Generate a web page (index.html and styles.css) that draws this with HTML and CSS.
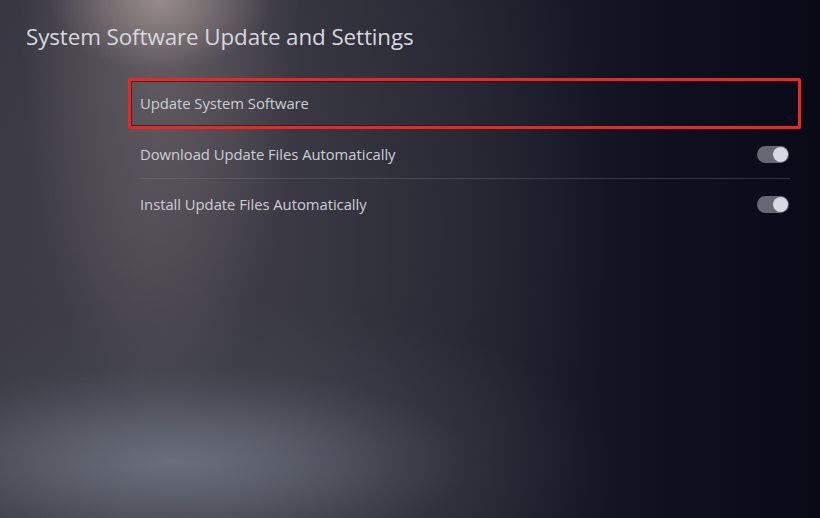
FILE: index.html
```html
<!DOCTYPE html>
<html lang="en">
<head>
<meta charset="utf-8">
<title>System Software Update and Settings</title>
<link rel="stylesheet" href="styles.css">
</head>
<body>
<div class="screen">
  <h1 class="title">System Software Update and Settings</h1>
  <div class="list">
    <div class="row row-focused">
      <span class="label">Update System Software</span>
    </div>
    <div class="row row-divided">
      <span class="label">Download Update Files Automatically</span>
      <span class="toggle"><span class="knob"></span></span>
    </div>
    <div class="row">
      <span class="label">Install Update Files Automatically</span>
      <span class="toggle"><span class="knob"></span></span>
    </div>
  </div>
</div>
</body>
</html>
```

FILE: styles.css
```css
html, body {
  margin: 0;
  padding: 0;
  width: 820px;
  height: 518px;
  overflow: hidden;
}

.screen {
  width: 820px;
  height: 518px;
  box-sizing: border-box;
  padding: 22px 0 0 26px;
  font-family: "Open Sans", "Noto Sans", sans-serif;
  color: #d9dadf;
  background:
    radial-gradient(ellipse 110px 70px at 160px 0px, rgba(185,170,164,0.6), rgba(185,170,164,0) 100%),
    radial-gradient(ellipse 300px 95px at 172px 462px, rgba(112,118,130,0.85) 0%, rgba(112,118,130,0.5) 40%, rgba(112,118,130,0.15) 75%, rgba(112,118,130,0) 100%),
    radial-gradient(ellipse 420px 170px at 200px 470px, rgba(80,84,96,0.55), rgba(80,84,96,0) 100%),
    radial-gradient(ellipse 140px 430px at 160px 0px, rgba(135,124,124,0.55), rgba(135,124,124,0) 100%),
    radial-gradient(ellipse 480px 700px at 130px 230px, rgba(70,68,78,0.85), rgba(70,68,78,0) 100%),
    linear-gradient(90deg, #2c2c36 0%, #2a2b36 35%, #1c1e2a 60%, #0e1020 82%, #080a16 100%);
}

.title {
  margin: 0;
  font-size: 22.4px;
  font-weight: 400;
  line-height: 30px;
  letter-spacing: -0.1px;
  color: #d7d8dd;
}

.list {
  margin: 26px 0 0 102px;
  width: 673px;
  display: flex;
  flex-direction: column;
}

.row {
  height: 50px;
  box-sizing: border-box;
  display: flex;
  align-items: center;
  justify-content: space-between;
  padding: 0 12px 0 12px;
  position: relative;
}

.row-focused {
  height: 51px;
  border: 3px solid #f0251f;
  border-radius: 2px;
  padding-left: 9px;
  padding-bottom: 1px;
  box-shadow: inset 0 0 0 1px rgba(20,22,30,0.6);
}

.row-divided::after {
  content: "";
  position: absolute;
  left: 12px;
  right: 11px;
  bottom: 0;
  height: 1px;
  background: rgba(120,124,136,0.35);
}

.label {
  font-size: 14.8px;
  letter-spacing: -0.03px;
  color: #cdced4;
}

.toggle {
  width: 32px;
  height: 17px;
  border-radius: 9px;
  background: #656973;
  display: flex;
  align-items: center;
  justify-content: flex-end;
  padding-right: 1px;
  box-sizing: border-box;
}

.knob {
  width: 15px;
  height: 15px;
  border-radius: 50%;
  background: #d6d9e2;
}
```
